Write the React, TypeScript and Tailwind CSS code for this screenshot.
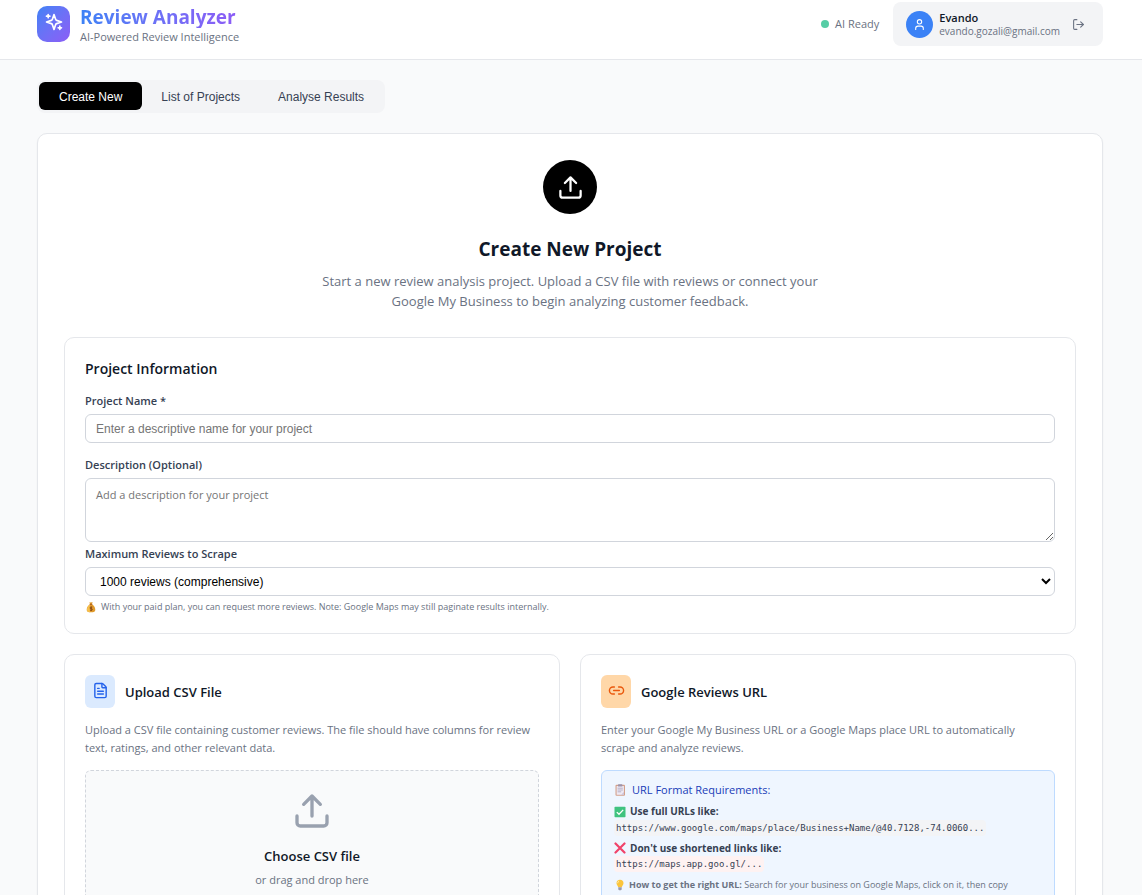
import { useState } from "react";
import type { ReactNode } from "react";
import { FileText, Link2, LogOut, User } from "lucide-react";

function SparklesIcon() {
  return (
    <svg viewBox="0 0 24 24" className="size-5" fill="none" stroke="currentColor" strokeWidth="2" strokeLinecap="round" strokeLinejoin="round" aria-hidden="true">
      <path d="m12 3-1.912 5.813a2 2 0 0 1-1.275 1.275L3 12l5.813 1.912a2 2 0 0 1 1.275 1.275L12 21l1.912-5.813a2 2 0 0 1 1.275-1.275L21 12l-5.813-1.912a2 2 0 0 1-1.275-1.275L12 3Z" />
      <path d="M5 3v4M3 5h4M19 17v4M17 19h4" />
    </svg>
  );
}

function UploadIcon({ className }: { className: string }) {
  return (
    <svg viewBox="0 0 24 24" className={className} fill="none" stroke="currentColor" strokeWidth="2" strokeLinecap="round" strokeLinejoin="round" aria-hidden="true">
      <path d="M21 15v4a2 2 0 0 1-2 2H5a2 2 0 0 1-2-2v-4" />
      <path d="m17 8-5-5-5 5M12 3v12" />
    </svg>
  );
}

function MoneyBagIcon() {
  return (
    <svg viewBox="0 0 12 12" className="size-3 shrink-0" aria-hidden="true">
      <path d="M4.4 1.2 6 1.6l1.6-.5-.7 2.2c2 1 3.4 3.200 3.400 5.400 0 1.800-1.200 2.600-4.300 2.600S1.700 10.500 1.700 8.700c0-2.200 1.400-4.400 3.400-5.400z" fill="#e09a2b" />
      <path d="M2 8.200c.2-1.900 1.400-3.900 3.200-4.800-.6 2-.8 5-.1 7.800-2.100-.1-3.300-1-3.100-3z" fill="#f6c04d" />
      <path d="M4.700 3.300h2.600" stroke="#a3541c" strokeWidth=".9" />
      <path d="M7.200 6.100H5.900a.8.800 0 0 0 0 1.600h.6a.8.800 0 0 1 0 1.600H5.100M6.200 5.500v4.400" stroke="#7c3f14" strokeWidth=".8" fill="none" />
    </svg>
  );
}

function ClipboardIcon() {
  return (
    <svg viewBox="0 0 12 12" className="size-3 shrink-0" aria-hidden="true">
      <rect x="1.500" y=".8" width="9.500" height="11" rx="1" fill="#d3a08a" />
      <rect x="2.600" y="2" width="7.300" height="8.800" fill="#eee9f3" />
      <rect x="4" y=".3" width="4.400" height="2.200" rx=".6" fill="#9b93ab" />
      <path d="M3.600 4.200h5.200M3.600 6h5.200M3.600 7.800h3.600" stroke="#a9a2ba" strokeWidth=".8" />
      <path d="M9.900 8v2.800H7.200z" fill="#c9bfd6" />
    </svg>
  );
}

function CheckIcon() {
  return (
    <svg viewBox="0 0 12 12" className="size-3 shrink-0" aria-hidden="true">
      <rect x=".5" y=".7" width="11" height="10.600" rx=".8" fill="#3fc380" />
      <path d="m2.800 6.100 2.200 2.200 4.200-4.400" stroke="#fff" strokeWidth="1.300" fill="none" />
    </svg>
  );
}

function CrossIcon() {
  return (
    <svg viewBox="0 0 12 12" className="size-3 shrink-0" aria-hidden="true">
      <path d="m1.500 1.500 9 9M10.500 1.500l-9 9" stroke="#f0436a" strokeWidth="2.200" strokeLinecap="round" />
    </svg>
  );
}

function BulbIcon() {
  return (
    <svg viewBox="0 0 12 12" className="size-3 shrink-0" aria-hidden="true">
      <path d="M6 .8a3.500 3.500 0 0 1 3.500 3.500c0 1.700-1.300 2.300-1.600 3.900H4.100C3.800 6.600 2.500 6 2.500 4.300A3.500 3.500 0 0 1 6 .8z" fill="#fbc53c" />
      <path d="M5 2a2.300 2.300 0 0 0-1.300 2.200" stroke="#fff1b8" strokeWidth=".8" fill="none" />
      <path d="M4.300 8.200h3.400v2.200l-.8.900H5.100l-.8-.9z" fill="#9b9bab" />
    </svg>
  );
}

const tabs = ["Create New", "List of Projects", "Analyse Results"];

function Header() {
  return (
    <header className="border-b border-gray-200 bg-white pr-[39px] pl-[37px]">
      <div className="flex items-center justify-between pt-0.5 pb-[13px]">
        <div className="flex items-center gap-2.5">
          <div className="flex h-9 w-[33px] items-start justify-center rounded-[10px] bg-linear-to-br from-[#3b82f6] to-[#8b5cf6] pt-1.5 text-white">
            <SparklesIcon />
          </div>
          <div className="pt-1">
            <h1 className="w-fit bg-linear-to-r from-[#3b82f6] to-[#8b5cf6] bg-clip-text text-[19px] leading-[22px] font-bold text-transparent">
              Review Analyzer
            </h1>
            <p className="text-[11px] leading-[18px] text-gray-500">AI-Powered Review Intelligence</p>
          </div>
        </div>
        <div className="flex items-center gap-3.5">
          <div className="flex items-center gap-1.5">
            <span className="size-2 rounded-full bg-[#56cda5]" />
            <span className="text-[11px] leading-4 text-gray-500">AI Ready</span>
          </div>
          <div className="flex items-center gap-3 rounded-lg bg-gray-100 py-2 pr-[18px] pl-[13px]">
            <div className="flex items-center gap-1.5">
              <div className="flex size-[27px] items-center justify-center rounded-full bg-[#3b82f6] text-white">
                <User size={13} />
              </div>
              <div>
                <p className="text-[11px] leading-[15px] font-semibold text-gray-900">Evando</p>
                <p className="text-[10px] leading-[13px] text-gray-500">evando.gozali@gmail.com</p>
              </div>
            </div>
            <button type="button" aria-label="Log out" className="cursor-pointer text-gray-500">
              <LogOut size={13} />
            </button>
          </div>
        </div>
      </div>
    </header>
  );
}

function OptionCard({ icon, iconClass, title, description, children }: { icon: ReactNode; iconClass: string; title: string; description: string; children: ReactNode }) {
  return (
    <section className="min-w-0 rounded-[10px] border border-gray-200 p-5">
      <div className="flex items-center gap-2.5">
        <div className={`flex h-[33px] w-[30px] items-start justify-center rounded-md pt-[7px] ${iconClass}`}>{icon}</div>
        <h3 className="text-[13px] leading-5 font-semibold text-gray-900">{title}</h3>
      </div>
      <p className="mt-[13px] mb-[13px] pr-1.5 text-[11px] leading-[18px] text-gray-500">{description}</p>
      {children}
    </section>
  );
}

export default function App() {
  const [active, setActive] = useState(tabs[0]);

  return (
    <div className="min-h-screen bg-gray-50 font-['Open_Sans','Noto_Sans',sans-serif]">
      <Header />
      <main className="pt-5 pr-[39px] pb-10 pl-[37px]">
        <nav className="flex w-fit rounded-lg bg-gray-100 px-0.5 pt-0.5 pb-[3px] font-['Liberation_Sans',Arial,sans-serif] text-xs">
          {tabs.map((tab) => (
            <button
              key={tab}
              type="button"
              onClick={() => setActive(tab)}
              className={`h-7 cursor-pointer rounded-md pt-px ${
                tab === active ? "bg-black px-5 text-white" : "px-[19px] text-gray-700"
              }`}
            >
              {tab}
            </button>
          ))}
        </nav>

        <div className="mt-5 rounded-[10px] border border-gray-200 bg-white p-[26px] shadow-xs">
          <div className="flex flex-col items-center text-center">
            <div className="flex size-[54px] items-center justify-center rounded-full bg-black text-white">
              <UploadIcon className="size-[27px]" />
            </div>
            <h2 className="mt-5 text-[19px] leading-[30px] font-bold text-gray-900">Create New Project</h2>
            <p className="mt-[7px] max-w-[500px] text-[13px] leading-5 text-gray-500">
              Start a new review analysis project. Upload a CSV file with reviews or connect your Google My Business to begin analyzing customer feedback.
            </p>
          </div>

          <section className="mt-[26px] rounded-[10px] border border-gray-200 px-5 pt-5 pb-[18px]">
            <h3 className="text-sm leading-[22px] font-semibold text-gray-900">Project Information</h3>
            <div className="mt-3 flex flex-col">
              <label htmlFor="name" className="text-[11px] leading-[18px] font-semibold text-gray-700">Project Name *</label>
              <input
                id="name"
                type="text"
                placeholder="Enter a descriptive name for your project"
                className="mt-1 h-[29px] rounded-md border border-gray-300 px-2.5 font-['Liberation_Sans',Arial,sans-serif] text-xs placeholder:text-[#757575]"
              />
              <label htmlFor="description" className="mt-[13px] text-[11px] leading-[18px] font-semibold text-gray-700">Description (Optional)</label>
              <textarea
                id="description"
                placeholder="Add a description for your project"
                className="mt-1 h-16 resize-y rounded-md border border-gray-300 px-2.5 py-2 text-[11px] leading-4 placeholder:text-[#757575]"
              />
              <label htmlFor="limit" className="mt-[3px] text-[11px] leading-[18px] font-semibold text-gray-700">Maximum Reviews to Scrape</label>
              <select
                id="limit"
                className="mt-1 h-[29px] rounded-md border border-gray-300 bg-white px-2.5 font-['Liberation_Sans',Arial,sans-serif] text-xs text-black"
              >
                <option>1000 reviews (comprehensive)</option>
                <option>500 reviews</option>
                <option>100 reviews</option>
              </select>
              <p className="mt-[3px] flex items-center gap-1 text-[9px] leading-4 text-gray-500">
                <MoneyBagIcon />
                With your paid plan, you can request more reviews. Note: Google Maps may still paginate results internally.
              </p>
            </div>
          </section>

          <div className="mt-5 grid grid-cols-2 gap-5">
            <OptionCard
              icon={<FileText size={17} />}
              iconClass="bg-blue-100 text-[#2563eb]"
              title="Upload CSV File"
              description="Upload a CSV file containing customer reviews. The file should have columns for review text, ratings, and other relevant data."
            >
              <label className="flex cursor-pointer flex-col items-center rounded-md border border-dashed border-gray-300 bg-gray-50 pt-5 pb-10">
                <input type="file" accept=".csv" className="sr-only" />
                <UploadIcon className="size-10 text-gray-400" />
                <span className="mt-[15px] text-[13px] leading-5 font-semibold text-gray-900">Choose CSV file</span>
                <span className="mt-1 text-[11px] leading-5 text-gray-500">or drag and drop here</span>
              </label>
            </OptionCard>

            <OptionCard
              icon={<Link2 size={17} />}
              iconClass="bg-orange-200 text-[#ea580c]"
              title="Google Reviews URL"
              description="Enter your Google My Business URL or a Google Maps place URL to automatically scrape and analyze reviews."
            >
              <div className="rounded-md border border-blue-200 bg-blue-50 px-3 pt-2.5 pb-3 text-[11px] text-gray-700">
                <p className="flex items-center gap-1.5 leading-[18px] font-medium text-blue-800">
                  <ClipboardIcon />
                  URL Format Requirements:
                </p>
                <p className="mt-1 flex items-center gap-1 text-[10px] leading-[17px] font-bold">
                  <CheckIcon />
                  Use full URLs like:
                </p>
                <code className="block w-fit rounded-sm bg-gray-100 px-0.5 font-['DejaVu_Sans_Mono',monospace] text-[9px] leading-4">
                  https://www.google.com/maps/place/Business+Name/@40.7128,-74.0060...
                </code>
                <p className="mt-1 flex items-center gap-1 text-[10px] leading-4 font-bold">
                  <CrossIcon />
                  Don't use shortened links like:
                </p>
                <code className="block w-fit rounded-sm bg-red-50 px-0.5 font-['DejaVu_Sans_Mono',monospace] text-[9px] leading-4">
                  https://maps.app.goo.gl/...
                </code>
                <div className="mt-[3px] flex gap-[3px] pr-5 text-[9px] leading-5 text-gray-500">
                  <span className="pt-1"><BulbIcon /></span>
                  <p>
                    <strong>How to get the right URL:</strong> Search for your business on Google Maps, click on it, then copy the full URL from your browser's address bar.
                  </p>
                </div>
              </div>
            </OptionCard>
          </div>
        </div>
      </main>
    </div>
  );
}
